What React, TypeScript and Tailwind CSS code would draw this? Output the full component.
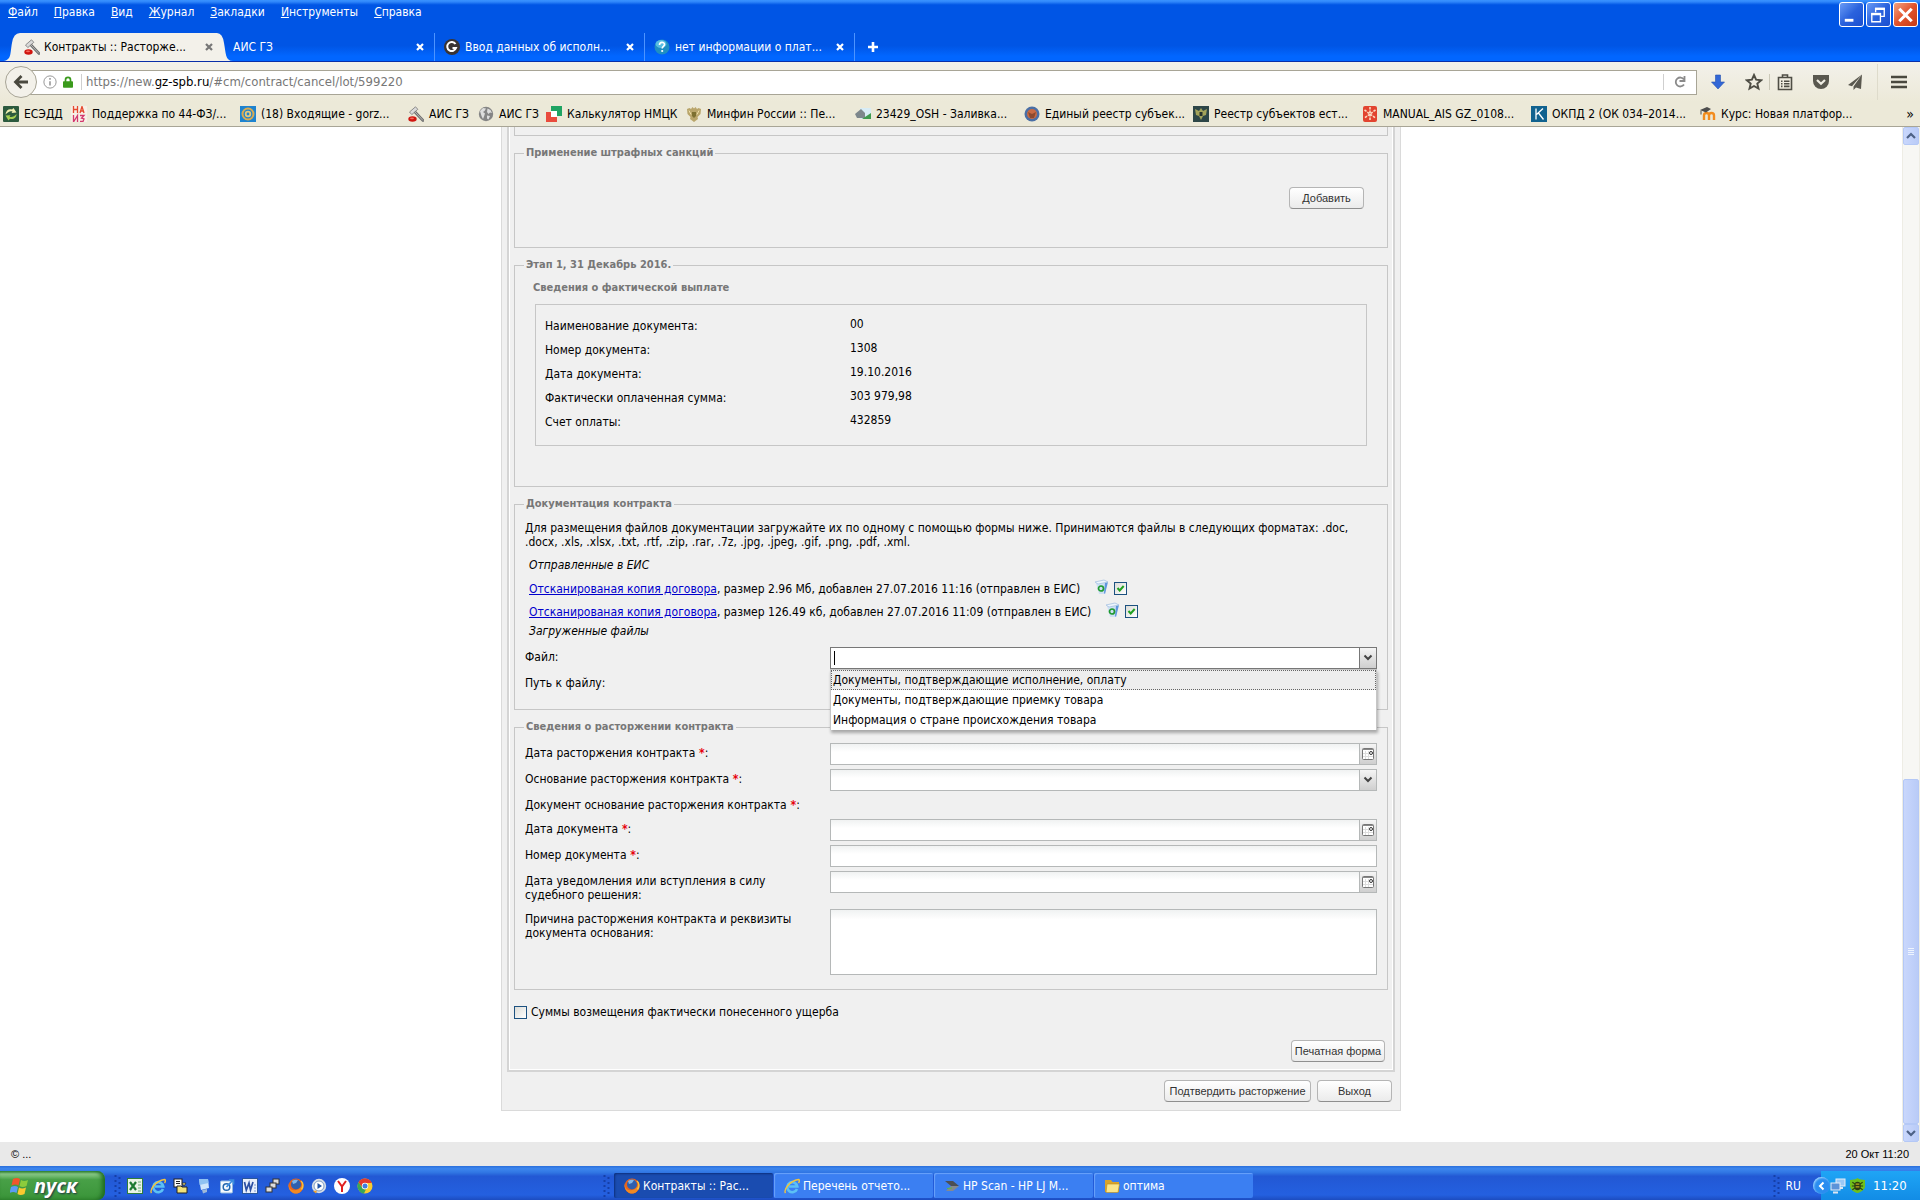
import type { ReactNode } from 'react';

const sans = "font-['DejaVu_Sans_Condensed','DejaVu_Sans','Noto_Sans',sans-serif]";

// Small 16px pictures used by tabs, bookmarks and the taskbar
const icons: Record<string, ReactNode> = {
    hammer: (
        <>
            <path d="M7 6l8 8.500" stroke="#6b6b6b" strokeWidth="2.600" strokeLinecap="round" />
            <path d="M7 6l8 8.500" stroke="#b9b9b9" strokeWidth="1" />
            <path d="M1.500 6L7.500.8l2.300 2.500-6 5.300z" fill="#d9d9d9" stroke="#777" strokeWidth=".8" />
            <ellipse cx="4.500" cy="13" rx="4.200" ry="2.700" fill="#d0150f" />
            <ellipse cx="4" cy="12.300" rx="2" ry=".9" fill="#f56a5c" />
        </>
    ),
    g: (
        <>
            <circle cx="8" cy="8" r="8" fill="#3a3433" />
            <path d="M11.500 5A4.500 4.500 0 1 0 12 9H8.500" stroke="#fff" strokeWidth="2" fill="none" />
        </>
    ),
    question: (
        <>
            <circle cx="8" cy="8" r="7.500" fill="#1f8fc2" />
            <ellipse cx="7" cy="5" rx="5.500" ry="4" fill="#6fd0ee" opacity=".7" />
            <path d="M5.500 6c0-3.500 5-3.300 5-.5 0 2-2.300 1.800-2.300 4" stroke="#fff" strokeWidth="1.600" fill="none" />
            <circle cx="8.200" cy="12" r="1.100" fill="#fff" />
        </>
    ),
    esedd: (
        <>
            <rect width="16" height="16" rx="1" fill="#2c5a3e" />
            <path d="M2.500 8.500C3 4 6 2.500 9 3.500L10.500 2l3 4.500-5 .5 1-1.500C7 4.500 5 6 2.500 8.500z" fill="#f0efb0" />
            <path d="M13.500 8C13.500 12 10 14 7 12.700L5.500 14.500l-3-5 5-.3-1 1.600c2.500.8 5-.3 7-2.800z" fill="#a6cf52" />
        </>
    ),
    naiz: (
        <>
            <rect width="16" height="16" fill="#f7efe6" />
            <path d="M2.500 0v7M6.500 0v7M2.500 3.500h4M9 7l2-6.500L13 7M9.700 5h2.600" stroke="#e5492e" strokeWidth="1.300" fill="none" />
            <path d="M2.500 9v7l4-6.500V16M9 9.500h4l-2.500 2.700 2.500.8-1 2.500H9" stroke="#d3386e" strokeWidth="1.300" fill="none" />
        </>
    ),
    mail: (
        <>
            <rect width="16" height="16" fill="#1e83cf" />
            <circle cx="8" cy="8" r="5.500" stroke="#d9ac52" strokeWidth="2" fill="none" />
            <circle cx="8" cy="8" r="2.300" stroke="#e8c878" strokeWidth="1.800" fill="none" />
        </>
    ),
    globe: (
        <>
            <circle cx="8" cy="8" r="7.200" fill="#858585" />
            <path d="M2 5l3-3 3 .5L6.500 5 5 6l2 1.500-1 3L5 13 3.500 10z" fill="#ddd" />
            <path d="M9.500 2.500l3 1.500 1.500 3-2-.5-1.500 1.500-1.500-2zM9 9.500l3 .5-1.500 3.500-1.500-1z" fill="#ddd" />
        </>
    ),
    calc: (
        <>
            <path d="M5 0h11v10h-5V5H5z" fill="#1fa463" />
            <path d="M0 6h5v5h6v5H0z" fill="#e94b3c" />
            <path d="M5 5h6v6H5z" fill="#fff" />
        </>
    ),
    eagle: (
        <>
            <path d="M1 3l2.500-1L5 3l1.500-2L8 2.500 9.500 1 11 3l1.500-1L15 3l-.5 5-3 3 .5 2-4 3-4-3 .5-2-3-3z" fill="#b9a56a" />
            <path d="M6 6h4v4l-2 2-2-2z" fill="#7d7030" />
            <path d="M3 4.500l2 4M13 4.500l-2 4" stroke="#efe0a8" />
        </>
    ),
    house: (
        <>
            <rect x="5" y="2" width="11" height="11" fill="#d8ecf5" />
            <path d="M0 8l6-5 4 4v5H2z" fill="#7d878c" />
            <path d="M7 13l9-6v6z" fill="#3f9b4e" />
        </>
    ),
    crest: (
        <>
            <circle cx="8" cy="8" r="7.500" fill="#4a6fa5" />
            <circle cx="8" cy="8" r="5" fill="#c96a43" />
            <path d="M4 6l4 2 4-2-2 6H6z" fill="#8d4a2f" />
        </>
    ),
    darkEagle: (
        <>
            <rect width="16" height="16" fill="#2d4647" />
            <path d="M2 3l4 2 2-3 2 3 4-2-1 6-3 1-2 4-2-4-3-1z" fill="#a3a35a" />
            <path d="M6.500 6h3v4h-3z" fill="#28332e" />
        </>
    ),
    manual: (
        <>
            <rect x="1" width="14" height="16" rx="2" fill="#e2442f" />
            <path d="M8 1v14M2.500 4l11 8M13.500 4l-11 8" stroke="#fbd9c0" strokeWidth="1.600" strokeDasharray="2.500 1" />
        </>
    ),
    k: (
        <>
            <rect width="16" height="16" fill="#11628f" />
            <path d="M5 2.500v11M12 2.500L5.500 8.500M7.500 7l5 6.500" stroke="#fff" strokeWidth="1.300" />
        </>
    ),
    moodle: (
        <>
            <path d="M4 14V9.500Q4 7 6.500 7T9 9.500V14M9 9.500Q9 7 11.500 7T14 9.500V14" stroke="#f28c1e" strokeWidth="2.400" fill="none" />
            <path d="M0 4l7-3 4 2-5 3.500z" fill="#4d4d4d" />
            <path d="M1 4.500v4" stroke="#4d4d4d" />
        </>
    ),
    excel: (
        <>
            <rect x=".5" y=".5" width="15" height="15" fill="#e8f3e6" stroke="#2f7d3b" />
            <path d="M3 4l6 8M9 4l-6 8" stroke="#1d7a32" strokeWidth="2.200" />
            <path d="M11 4h3M11 7h3M11 10h3M11 13h3" stroke="#6fae78" />
        </>
    ),
    ie: (
        <>
            <path d="M13 11A5 5 0 1 1 13.300 8.500H5" stroke="#5cc1f5" strokeWidth="2.600" fill="none" />
            <path d="M1.500 15C-.5 12 5 3 14.500 1.500c1.500.2.800 2.500 0 3.500" stroke="#f3c33c" strokeWidth="1.400" fill="none" />
        </>
    ),
    folderPage: (
        <>
            <rect x="1" y="1" width="8" height="8" fill="#fff" stroke="#222" />
            <path d="M3 3.500h4M3 5.500h4" stroke="#222" />
            <path d="M4 8h4l1 1h5v6H4z" fill="#f2e27a" stroke="#222" />
            <path d="M9 5h4l-2 3z" fill="#f2e27a" stroke="#222" strokeWidth=".7" />
        </>
    ),
    desktop: (
        <>
            <path d="M3 1h9l1 9-8 2z" fill="#cfe6fb" />
            <path d="M3 1h9l.5 4-9 2z" fill="#8fc2f2" />
            <path d="M6 12l5-1v3l-4 1.500z" fill="#9fb9d8" />
        </>
    ),
    outlook: (
        <>
            <rect x="1.500" y="3" width="12" height="12" rx="1" fill="#f4f9fe" stroke="#8fb8e0" />
            <circle cx="7.500" cy="9" r="3.300" stroke="#2366ad" strokeWidth="1.500" fill="none" />
            <path d="M7.500 9l6-6.500M10 2h4.500v4.500" stroke="#3a8de0" strokeWidth="1.700" fill="none" />
        </>
    ),
    word: (
        <>
            <rect x=".5" y=".5" width="15" height="15" fill="#e7eefb" stroke="#2b579a" />
            <path d="M2.500 4l1.800 8L7 5l1.500 7L11 4" stroke="#2b4fa3" strokeWidth="1.700" fill="none" />
            <path d="M12 7h2M12 10h2M12 13h2" stroke="#7c9ad0" />
        </>
    ),
    nodes: (
        <>
            <path d="M3 12l5-4 5-5" stroke="#222" />
            <rect x="8" y="1" width="6" height="5" fill="#ddd" stroke="#333" />
            <rect x="5" y="5" width="6" height="5" fill="#ddd" stroke="#333" />
            <rect x="1" y="9" width="6" height="5" fill="#ddd" stroke="#333" />
        </>
    ),
    firefox: (
        <>
            <circle cx="8" cy="8" r="7.500" fill="#e8631c" />
            <circle cx="8" cy="6.500" r="5" fill="#2f5fae" />
            <path d="M4 3q3-2 6-1l-2 3-3 1z" fill="#7fb6ea" />
            <path d="M.8 5c0 4 1 6.500 4.200 7 4 .8 8-1 9-5.500 1.500 4-1 9-6 9S-.5 10 .8 5z" fill="#f08a24" />
            <path d="M13 3c2.500 2 2.500 6 .5 8.500" stroke="#f9c33b" strokeWidth="1.400" fill="none" />
        </>
    ),
    media: (
        <>
            <circle cx="8" cy="8" r="7.200" fill="#d6dde6" />
            <circle cx="8" cy="8" r="5" fill="#fff" stroke="#7d9cc4" />
            <path d="M6.500 5l4.500 3-4.500 3z" fill="#2256a8" />
            <path d="M2 13l3 2.500 1-3z" fill="#f0a22e" />
        </>
    ),
    yandex: (
        <>
            <circle cx="8" cy="8" r="8" fill="#fff" />
            <path d="M4 3l4 5.500L12 3M8 8v6" stroke="#e02020" strokeWidth="2" fill="none" />
        </>
    ),
    chrome: (
        <>
            <circle cx="8" cy="8" r="7.500" fill="#f7cd31" />
            <path d="M1.500 4.200A7.500 7.500 0 0 1 14.800 5H8a3.300 3.300 0 0 0-3 4.500z" fill="#e33b2e" />
            <path d="M1.500 4.200L5 9.500a3.300 3.300 0 0 0 4 1.700l-2 4.300A7.500 7.500 0 0 1 1.500 4.200z" fill="#3aa757" />
            <circle cx="8" cy="8" r="3.200" fill="#fff" />
            <circle cx="8" cy="8" r="2.500" fill="#3f7fe0" />
        </>
    ),
    hp: (
        <>
            <path d="M1 3h8l6 5H7z" fill="#4c4f54" />
            <path d="M2 13l5-5h8l-6 5z" fill="#85898f" />
            <path d="M3 10.500l5-.5" stroke="#57b947" />
        </>
    ),
    folder: (
        <>
            <path d="M1 2h6l1.500 2H15v10H1z" fill="#d9a32b" />
            <path d="M3 6h12.500L14 14.500H2z" fill="#fbe58a" stroke="#b98a1d" strokeWidth=".6" />
        </>
    ),
    network: (
        <>
            <rect x="6" y="1" width="9" height="7" fill="#9bc8f5" stroke="#e6eef8" />
            <path d="M9 10h4" stroke="#dce6f2" strokeWidth="2" />
            <rect x="1" y="5" width="9" height="7" fill="#5c93d8" stroke="#e6eef8" />
            <path d="M3 14.500h5" stroke="#dce6f2" strokeWidth="2" />
        </>
    ),
    drweb: (
        <>
            <path d="M8 0c2 1.500 5 2 8 2v7c0 3-4 6-8 7-4-1-8-4-8-7V2c3 0 6-.5 8-2z" fill="#6fc01b" />
            <ellipse cx="8" cy="8.500" rx="3.500" ry="4.500" fill="#2c3a12" />
            <path d="M2.500 4.500l3 2M2 8.500h12M2.500 12.500l3-2M13.500 4.500l-3 2M13.500 12.500l-3-2" stroke="#2c3a12" strokeWidth="1.200" />
            <path d="M6 6.500h4M6 9.500h4" stroke="#f0d020" />
        </>
    ),
    trash: (
        <>
            <path d="M2 4l11-1-2 12H5z" fill="#cfe0f3" />
            <path d="M11 4l3-1-3 12-1-1z" fill="#5f97dd" />
            <path d="M1 3l9-2 4 2-10 2z" fill="#eef5fc" stroke="#9dbbe0" strokeWidth=".7" />
            <circle cx="7" cy="9.500" r="2.500" stroke="#1f9a2f" strokeWidth="1.700" fill="none" />
        </>
    ),
};

function Icon({ name, className = 'size-4' }: { name: string; className?: string }) {
    return (
        <svg viewBox="0 0 16 16" fill="none" aria-hidden="true" className={`${className} shrink-0`}>
            {icons[name]}
        </svg>
    );
}

const menu = ['Файл', 'Правка', 'Вид', 'Журнал', 'Закладки', 'Инструменты', 'Справка'];

const tabs = [
    { icon: '', title: 'АИС ГЗ' },
    { icon: 'g', title: 'Ввод данных об исполн...' },
    { icon: 'question', title: 'нет информации о плат...' },
];

const bookmarks = [
    { icon: 'esedd', title: 'ЕСЭДД', width: 'w-[68px]' },
    { icon: 'naiz', title: 'Поддержка по 44-ФЗ/...', width: 'w-[169px]' },
    { icon: 'mail', title: '(18) Входящие - gorz...', width: 'w-[168px]' },
    { icon: 'hammer', title: 'АИС ГЗ', width: 'w-[70px]' },
    { icon: 'globe', title: 'АИС ГЗ', width: 'w-[68px]' },
    { icon: 'calc', title: 'Калькулятор НМЦК', width: 'w-[140px]' },
    { icon: 'eagle', title: 'Минфин России :: Пе...', width: 'w-[169px]' },
    { icon: 'house', title: '23429_OSH - Заливка...', width: 'w-[169px]' },
    { icon: 'crest', title: 'Единый реестр субъек...', width: 'w-[169px]' },
    { icon: 'darkEagle', title: 'Реестр субъектов ест...', width: 'w-[169px]' },
    { icon: 'manual', title: 'MANUAL_AIS GZ_0108...', width: 'w-[169px]' },
    { icon: 'k', title: 'ОКПД 2 (ОК 034–2014...', width: 'w-[169px]' },
    { icon: 'moodle', title: 'Курс: Новая платфор...', width: 'w-[170px]' },
];

const payment = [
    ['Наименование документа:', '00'],
    ['Номер документа:', '1308'],
    ['Дата документа:', '19.10.2016'],
    ['Фактически оплаченная сумма:', '303 979,98'],
    ['Счет оплаты:', '432859'],
];

const sentFiles = [
    ', размер 2.96 Мб, добавлен 27.07.2016 11:16 (отправлен в ЕИС)',
    ', размер 126.49 кб, добавлен 27.07.2016 11:09 (отправлен в ЕИС)',
];

const fileTypes = [
    'Документы, подтверждающие исполнение, оплату',
    'Документы, подтверждающие приемку товара',
    'Информация о стране происхождения товара',
];

const quickLaunch = ['excel', 'ie', 'folderPage', 'desktop', 'outlook', 'word', 'nodes', 'firefox', 'media', 'yandex', 'chrome'];

const tasks = [
    { icon: 'firefox', title: 'Контракты :: Рас...', active: true },
    { icon: 'ie', title: 'Перечень отчето...' },
    { icon: 'hp', title: 'HP Scan - HP LJ M...' },
    { icon: 'folder', title: 'оптима' },
];

function TabClose({ color }: { color: string }) {
    return (
        <button type="button" aria-label="Закрыть вкладку" className="flex size-4 shrink-0 items-center justify-center">
            <svg viewBox="0 0 8 8" className="size-2">
                <path d="M1 1l6 6M7 1L1 7" stroke={color} strokeWidth="2.200" />
            </svg>
        </button>
    );
}

function WindowButtons() {
    const base = 'flex size-[25px] items-center justify-center rounded-[3px] border border-white';
    const blue = 'bg-gradient-to-br from-[#6b9bf5] via-[#2a62dd] to-[#1a4fd0]';
    return (
        <div className="flex gap-0.5 pt-0.5 pr-0.5">
            <button type="button" aria-label="Свернуть" className={`${base} ${blue}`}>
                <svg viewBox="0 0 24 24" className="size-6"><path d="M5 16h9v3H5z" fill="#fff" /></svg>
            </button>
            <button type="button" aria-label="Восстановить" className={`${base} ${blue}`}>
                <svg viewBox="0 0 24 24" className="size-6" fill="none" stroke="#fff">
                    <path d="M9 9V5.500h9v8h-3.500" strokeWidth="1.400" />
                    <path d="M8.300 5.500h10.400" strokeWidth="2.500" />
                    <path d="M5 11h9v8H5z" strokeWidth="1.400" />
                    <path d="M4.300 11h10.400" strokeWidth="2.500" />
                </svg>
            </button>
            <button type="button" aria-label="Закрыть" className={`${base} bg-gradient-to-br from-[#f0a080] via-[#e2522b] to-[#c43a14]`}>
                <svg viewBox="0 0 24 24" className="size-6"><path d="M5.500 5.500l13 13M18.500 5.500l-13 13" stroke="#fff" strokeWidth="3.200" /></svg>
            </button>
        </div>
    );
}

function TitleBar() {
    return (
        <header className="border-b border-[#0a2fa8] bg-[linear-gradient(#3a93ff_0%,#2f86fa_3%,#0055e5_8%,#0055e5_75%,#0166ff_92%)] text-white">
            <div className="flex h-[33px] items-start justify-between">
                <nav className="flex gap-4 pt-1 pl-2 text-xs leading-4">
                    {menu.map((item) => (
                        <a key={item} href="#menu"><u>{item[0]}</u>{item.slice(1)}</a>
                    ))}
                </nav>
                <WindowButtons />
            </div>
            <div className="flex h-7 items-stretch text-xs">
                <div className="flex w-[233px] shrink-0 items-stretch text-black">
                    <svg viewBox="0 0 20 28" className="h-7 w-5 shrink-0"><path d="M2 28C12 28 10 20 12 10Q13.500 0 20 0v28z" fill="#f3f1ea" /></svg>
                    <div className="flex min-w-0 flex-1 items-center gap-1 bg-[#f3f1ea] pl-1">
                        <Icon name="hammer" />
                        <span className="flex-1 truncate">Контракты :: Расторже...</span>
                        <TabClose color="#777" />
                    </div>
                    <svg viewBox="0 0 16 28" className="h-7 w-4 shrink-0"><path d="M16 28C8 28 9 20 7 10Q5.500 0 0 0v28z" fill="#f3f1ea" /></svg>
                </div>
                {tabs.map((tab, i) => (
                    <div key={tab.title} className={`flex shrink-0 items-center gap-[5px] ${i === 0 ? 'w-[202px]' : 'w-[210px] pl-[9px]'} border-r border-[#4d94ff] pr-1.5`}>
                        {tab.icon && <Icon name={tab.icon} />}
                        <span className="flex-1 truncate">{tab.title}</span>
                        <TabClose color="#fff" />
                    </div>
                ))}
                <button type="button" aria-label="Новая вкладка" className="px-3">
                    <svg viewBox="0 0 12 12" className="size-3"><path d="M6 1v10M1 6h10" stroke="#fff" strokeWidth="2.600" /></svg>
                </button>
            </div>
        </header>
    );
}

function Toolbar() {
    return (
        <div className="flex h-10 items-center bg-gradient-to-b from-[#f3f1ea] to-[#ece9d8]">
            <button type="button" aria-label="Назад" className="z-10 ml-[5px] flex size-8 shrink-0 items-center justify-center rounded-full border border-[#a8a596] bg-[#f3f1ea]">
                <svg viewBox="0 0 16 16" className="size-4" fill="none" stroke="#4a493f" strokeWidth="2.800"><path d="M15 8H3M8.500 2L2.500 8l6 6" /></svg>
            </button>
            <div className="-ml-2 flex h-[25px] min-w-0 flex-1 items-center border border-[#a8a596] bg-white pl-[13px]">
                <svg viewBox="0 0 16 16" className="size-3.5 shrink-0" fill="none" stroke="#8a8a8a">
                    <circle cx="8" cy="8" r="7" />
                    <path d="M8 7v5M8 3.500v2" strokeWidth="1.600" />
                </svg>
                <svg viewBox="0 0 12 14" className="ml-1.5 h-3 w-2.5 shrink-0">
                    <path d="M3 7V4.500a3 3 0 0 1 6 0V7" stroke="#3b9a1c" strokeWidth="2" fill="none" />
                    <rect x="0" y="6" width="12" height="8" rx="1" fill="#3b9a1c" />
                </svg>
                <div className="ml-2 h-4 border-l border-[#cfcfcf]" />
                <div className="ml-1 flex-1 text-[13px] text-[#777]">https://new.<span className="text-black">gz-spb.ru</span>/#cm/contract/cancel/lot/599220</div>
                <button type="button" aria-label="Обновить" className="flex h-4 items-center border-l border-[#cfcfcf] px-2.5">
                    <svg viewBox="0 0 12 12" className="size-3" fill="none" stroke="#8a8a8a" strokeWidth="1.800"><path d="M10 8.500A4.500 4.500 0 1 1 10 3.500" /><path d="M10.500 0v5h-5" /></svg>
                </button>
            </div>
            <div className="flex items-center pr-3">
                <button type="button" aria-label="Загрузки" className="ml-3">
                    <svg viewBox="0 0 18 18" className="size-[18px]"><path d="M6.500 2h5v7h4L9 16 2.500 9h4z" fill="#3367d6" stroke="#2552b0" strokeWidth=".6" /></svg>
                </button>
                <button type="button" aria-label="В закладки" className="ml-[18px]">
                    <svg viewBox="0 0 18 18" className="size-[18px]"><path d="M9 2l2.100 4.700 5.100.5-3.900 3.400 1.200 5L9 13l-4.500 2.600 1.200-5L1.800 7.200l5.100-.5z" stroke="#4f4e45" strokeWidth="1.900" fill="none" /></svg>
                </button>
                <div className="ml-1.5 h-4 border-l border-[#cbc8b8]" />
                <button type="button" aria-label="Все закладки" className="ml-1.5">
                    <svg viewBox="0 0 18 18" className="size-[18px]" fill="none" stroke="#4f4e45" strokeWidth="1.600"><path d="M2.500 4.500h13v12h-13zM6.500 4V2h5v2M5 8.200h1.500M8 8.200h5.500M5 10.800h1.500M8 10.800h5.500M5 13.400h1.500M8 13.400h5.500" /></svg>
                </button>
                <button type="button" aria-label="Pocket" className="ml-[18px]">
                    <svg viewBox="0 0 18 18" className="size-[18px]"><path d="M1 2h16v6a8 8 0 0 1-16 0z" fill="#5a584f" /><path d="M5 7l4 3.800L13 7" stroke="#f0eee4" strokeWidth="2.200" fill="none" /></svg>
                </button>
                <button type="button" aria-label="Отправить" className="ml-4">
                    <svg viewBox="0 0 18 18" className="size-[18px]"><path d="M16 1.500L2 12l4 1.200zM16 1.500L7.500 13.500V17l2.500-2.500 5 1.500z" fill="#5a584f" /></svg>
                </button>
                <div className="ml-[13px] h-9 border-l border-[#dedbcb]" />
                <button type="button" aria-label="Меню" className="ml-3">
                    <svg viewBox="0 0 18 18" className="size-[18px]"><path d="M1 4h16M1 9h16M1 14h16" stroke="#4a493f" strokeWidth="2.600" /></svg>
                </button>
            </div>
        </div>
    );
}

function Bookmarks() {
    return (
        <nav className="flex h-[25px] items-center border-b border-[#a8a596] bg-[#ece9d8] pl-[3px] text-xs">
            {bookmarks.map((b, i) => (
                <a key={i} href="#bookmark" className={`flex shrink-0 items-center gap-[5px] whitespace-nowrap ${b.width}`}>
                    <Icon name={b.icon} />
                    {b.title}
                </a>
            ))}
            <button type="button" className="mr-1.5 ml-auto text-sm">»</button>
        </nav>
    );
}

function Section({ title, children }: { title: string; children: ReactNode }) {
    return (
        <fieldset className="mt-2.5 border border-[#c6c6c6]">
            <legend className="ml-[9px] px-0.5 text-[11px] leading-[14px] font-bold text-[#777]">{title}</legend>
            {children}
        </fieldset>
    );
}

function GreyButton({ children, className = '' }: { children: ReactNode; className?: string }) {
    return (
        <button type="button" className={`h-[22px] rounded-[4px] border border-[#b5b5b5] border-b-[#8f8f8f] bg-gradient-to-b from-white to-[#ebebeb] font-['Liberation_Sans',sans-serif] text-[11px] whitespace-nowrap text-[#333] ${className}`}>
            {children}
        </button>
    );
}

const fieldBox = 'w-full min-w-0 bg-gradient-to-b from-[#f0f2f2] to-white to-40% px-1 outline-none';

function Chevron() {
    return <svg viewBox="0 0 10 8" className="h-2 w-2.5"><path d="M1.500 1.500L5 5l3.500-3.500" stroke="#444" strokeWidth="2" fill="none" /></svg>;
}

function Label({ htmlFor, required, children }: { htmlFor?: string; required?: boolean; children: ReactNode }) {
    return (
        <label htmlFor={htmlFor} className="max-w-[280px] py-[3px] leading-[14px]">
            {children}
            {required && <span className="font-bold text-red-600"> *</span>}:
        </label>
    );
}

function DateField({ id }: { id: string }) {
    return (
        <div className="flex h-[22px] border border-[#b5b8b8]">
            <input id={id} type="text" className={fieldBox} />
            <button type="button" aria-label="Календарь" className="flex w-[17px] shrink-0 items-center justify-center border-l border-[#b5b8b8] bg-gradient-to-b from-[#f5f5f5] to-[#cfcfcf]">
                <svg viewBox="0 0 12 12" className="size-3">
                    <rect x=".5" y=".5" width="11" height="11" rx="1" fill="#fff" stroke="#777" />
                    <path d="M1 1.500h10" stroke="#888" />
                    <path d="M3.500 3v8M6.500 3v8M1 5.500h10M1 8.500h10" stroke="#ddd" />
                    <circle cx="9" cy="5" r="1.500" fill="#fff" stroke="#333" />
                </svg>
            </button>
        </div>
    );
}

function Check({ id, checked, label }: { id: string; checked?: boolean; label?: string }) {
    return (
        <span className="inline-grid shrink-0 *:col-start-1 *:row-start-1">
            <input id={id} type="checkbox" defaultChecked={checked} aria-label={label} className="size-[13px] appearance-none border border-[#1c5180] bg-gradient-to-br from-[#dcdcd7] to-white" />
            {checked && (
                <svg viewBox="0 0 13 13" className="pointer-events-none size-[13px]"><path d="M3.500 6l2.200 2.500L9.700 4" stroke="#21a121" strokeWidth="2" fill="none" /></svg>
            )}
        </span>
    );
}

function FileCombo() {
    return (
        <div className="relative">
            <div className="flex h-[22px] border border-[#777]">
                <div className="flex flex-1 items-center bg-white pl-[3px]">
                    <span className="h-3.5 border-l border-black" />
                    <input id="file" type="text" role="combobox" aria-expanded="true" aria-controls="file-types" className="w-full min-w-0 outline-none" />
                </div>
                <button type="button" aria-label="Открыть список" className="flex w-[17px] shrink-0 items-center justify-center border-l border-[#777] bg-gradient-to-b from-[#f5f5f5] to-[#cfcfcf]">
                    <Chevron />
                </button>
            </div>
            <ul id="file-types" role="listbox" className="absolute inset-x-0 top-full z-10 border-x border-t border-[#c6c6c6] bg-white shadow-[1px_3px_3px_rgba(0,0,0,0.3)]">
                {fileTypes.map((t, i) => (
                    <li key={t} role="option" aria-selected={i === 0} className={`h-5 border border-dotted px-px leading-[18px] ${i === 0 ? 'border-[#666] bg-[#eee]' : 'border-transparent'}`}>
                        {t}
                    </li>
                ))}
            </ul>
        </div>
    );
}

function ContractForm() {
    return (
        <div className="mx-auto w-full max-w-[900px] border-x border-b border-[#dadada] bg-[#f0f0f0] px-[5px] pb-2 text-xs">
            <div className="border-x-2 border-b-2 border-[#d4d4d4]">
                <div className="border-x border-b border-white px-1 pb-[7px]">
                    <div className="h-[9px] border-x border-b border-[#c6c6c6]" />

                    <Section title="Применение штрафных санкций">
                        <div className="flex justify-end pt-[27px] pr-[23px] pb-[38px]">
                            <GreyButton className="w-[75px]">Добавить</GreyButton>
                        </div>
                    </Section>

                    <Section title="Этап 1, 31 Декабрь 2016.">
                        <h3 className="pt-[9px] pl-[18px] text-[11px] leading-[14px] font-bold text-[#777]">Сведения о фактической выплате</h3>
                        <dl className="mx-5 mt-[9px] mb-10 border border-[#c6c6c6] pt-[9px] pb-[11px] pl-[9px]">
                            {payment.map(([name, value]) => (
                                <div key={name} className="grid h-6 grid-cols-[305px_1fr]">
                                    <dt className="leading-6">{name}</dt>
                                    <dd className="leading-5">{value}</dd>
                                </div>
                            ))}
                        </dl>
                    </Section>

                    <Section title="Документация контракта">
                        <div className="px-2.5 pt-2.5 pb-3.5">
                            <p className="max-w-[830px] leading-[14px]">
                                Для размещения файлов документации загружайте их по одному с помощью формы ниже. Принимаются файлы в следующих форматах: .doc, .docx, .xls, .xlsx, .txt, .rtf, .zip, .rar, .7z, .jpg, .jpeg, .gif, .png, .pdf, .xml.
                            </p>
                            <div className="mt-[5px] mb-2 pl-1">
                                <p className="leading-[23px] italic">Отправленные в ЕИС</p>
                                {sentFiles.map((info, i) => (
                                    <div key={info} className="flex h-[23px] items-center whitespace-nowrap">
                                        <a href="#file" className="text-[#0000cc] underline">Отсканированая копия договора</a>
                                        {info}
                                        <button type="button" aria-label="Удалить файл" className="mr-1 mb-1 ml-3.5"><Icon name="trash" /></button>
                                        <Check id={`sent-${i}`} checked label="Выбрать файл" />
                                    </div>
                                ))}
                                <p className="leading-4 italic">Загруженные файлы</p>
                            </div>
                            <div className="grid grid-cols-[305px_1fr] gap-y-1">
                                <Label htmlFor="file">Файл</Label>
                                <FileCombo />
                                <div className="flex h-[22px]"><Label>Путь к файлу</Label></div>
                            </div>
                        </div>
                    </Section>

                    <Section title="Сведения о расторжении контракта">
                        <div className="grid grid-cols-[305px_1fr] items-start gap-y-1 px-2.5 pt-[9px] pb-3.5">
                            <Label htmlFor="cancel-date" required>Дата расторжения контракта</Label>
                            <DateField id="cancel-date" />
                            <Label htmlFor="reason" required>Основание расторжения контракта</Label>
                            <div className="flex h-[22px] border border-[#b5b8b8]">
                                <select id="reason" className={`${fieldBox} appearance-none`} defaultValue="">
                                    <option value="" />
                                </select>
                                <span className="flex w-[17px] shrink-0 items-center justify-center border-l border-[#b5b8b8] bg-gradient-to-b from-[#f5f5f5] to-[#cfcfcf]"><Chevron /></span>
                            </div>
                            <p className="col-span-2 py-[3px] leading-[14px]">Документ основание расторжения контракта<span className="font-bold text-red-600"> *</span>:</p>
                            <Label htmlFor="doc-date" required>Дата документа</Label>
                            <DateField id="doc-date" />
                            <Label htmlFor="doc-number" required>Номер документа</Label>
                            <input id="doc-number" type="text" className={`${fieldBox} h-[22px] border border-[#b5b8b8]`} />
                            <Label htmlFor="notice-date">Дата уведомления или вступления в силу судебного решения</Label>
                            <DateField id="notice-date" />
                            <Label htmlFor="cause">Причина расторжения контракта и реквизиты документа основания</Label>
                            <textarea id="cause" className="h-[66px] w-full resize-none border border-[#b5b8b8] bg-gradient-to-b from-[#f0f2f2] to-white to-15% outline-none" />
                        </div>
                    </Section>

                    <div className="mt-3.5 flex h-4 items-center gap-1">
                        <Check id="damage" />
                        <label htmlFor="damage">Суммы возмещения фактически понесенного ущерба</label>
                    </div>
                    <div className="mt-5 flex justify-end pr-[3px]">
                        <GreyButton className="w-[94px]">Печатная форма</GreyButton>
                    </div>
                </div>
            </div>
            <div className="mt-2 flex justify-end gap-1.5 pr-[3px]">
                <GreyButton className="w-[147px]">Подтвердить расторжение</GreyButton>
                <GreyButton className="w-[75px]">Выход</GreyButton>
            </div>
        </div>
    );
}

function ScrollBar() {
    const box = 'flex w-full shrink-0 items-center justify-center rounded-[2px] border border-[#b4c8f6] bg-gradient-to-r from-[#c9d7fc] to-[#b9cbf7]';
    return (
        <div className="flex w-[18px] shrink-0 flex-col border-x border-[#eeede5] bg-[#f7f7f4]">
            <button type="button" aria-label="Вверх" className={`${box} h-[18px]`}>
                <svg viewBox="0 0 10 8" className="h-2 w-2.5"><path d="M1 6l4-4 4 4" stroke="#4d6185" strokeWidth="2.200" fill="none" /></svg>
            </button>
            <div className="flex-[635_0_0]" />
            <div className={`${box} flex-[343_0_0]`}>
                <svg viewBox="0 0 8 8" className="size-2"><path d="M1 .5h6M1 2.500h6M1 4.500h6M1 6.500h6" stroke="#eef4fe" /></svg>
            </div>
            <button type="button" aria-label="Вниз" className={`${box} h-[18px]`}>
                <svg viewBox="0 0 10 8" className="h-2 w-2.5"><path d="M1 2l4 4 4-4" stroke="#4d6185" strokeWidth="2.200" fill="none" /></svg>
            </button>
        </div>
    );
}

function Grip() {
    return (
        <svg viewBox="0 0 8 24" className="h-6 w-2 shrink-0">
            <path d="M2.500 1v22M6.500 3v20" stroke="#153fa8" strokeWidth="2" strokeDasharray="2 3" />
        </svg>
    );
}

function Taskbar() {
    return (
        <footer className="flex h-[34px] items-end bg-[linear-gradient(#2a6fdc_0%,#3d86ee_8%,#2f74e2_20%,#2258d4_30%,#2460e0_85%,#1c4cc0_100%)] text-xs text-white">
            <button type="button" className="flex h-[29px] w-[105px] shrink-0 items-center gap-1 rounded-r-lg bg-[linear-gradient(#3f8f3f_0%,#8ccb8a_10%,#48a047_30%,#3a9439_100%)] pl-2.5 shadow-[inset_-3px_0_4px_#1f6b1f]">
                <svg viewBox="0 0 20 20" className="size-5">
                    <path d="M3 3q4-2 7 0L8.500 9.500q-3-2-7 0z" fill="#f0562b" />
                    <path d="M11 4q3 2 7 0l-1.500 6q-4 2-7 0z" fill="#8ccc3c" />
                    <path d="M1 11q4-2 7 0l-1.500 6q-3-2-7 0z" fill="#5b9cf5" />
                    <path d="M9 11.500q3 2 7 0L14.500 18q-4 2-7 0z" fill="#fbc92f" />
                </svg>
                <span className="font-['Open_Sans','Noto_Sans',sans-serif] text-xl leading-6 font-bold italic [text-shadow:1px_1px_2px_#234]">пуск</span>
            </button>
            <div className="flex h-[29px] items-center gap-1.5 pl-2">
                <Grip />
                <div className="flex items-center gap-[7px]">
                    {quickLaunch.map((name) => (
                        <button key={name} type="button" aria-label={name}><Icon name={name} /></button>
                    ))}
                </div>
            </div>
            <div className="flex h-[29px] flex-1 items-center">
                <div className="w-[229px]" />
                <Grip />
                <div className="ml-1 flex gap-px">
                    {tasks.map((t) => (
                        <button key={t.title} type="button" className={`flex h-[25px] w-[159px] items-center gap-[3px] rounded-[2px] pl-2.5 ${t.active ? 'bg-[#1a4cb0] shadow-[inset_1px_1px_2px_#0d2f7d]' : 'bg-[#3b7ff2] shadow-[inset_1px_1px_1px_#6ba3fb]'}`}>
                            <Icon name={t.icon} />
                            {t.title}
                        </button>
                    ))}
                </div>
            </div>
            <div className="flex h-[29px] items-center">
                <Grip />
                <span className="ml-1.5">RU</span>
            </div>
            <div className="ml-5 flex h-[29px] w-[99px] items-center bg-gradient-to-b from-[#1fa5f5] to-[#128ce6]">
                <button type="button" aria-label="Показать значки" className="-ml-2 flex size-[17px] items-center justify-center rounded-full bg-[#2a8df0] shadow-[inset_1px_1px_2px_#9ed2ff]">
                    <svg viewBox="0 0 10 10" className="size-2.5"><path d="M6.500 1.500L3 5l3.500 3.500" stroke="#fff" strokeWidth="2" fill="none" /></svg>
                </button>
                <Icon name="network" />
                <Icon name="drweb" className="ml-1 size-[15px]" />
                <time className="ml-2 text-[13px]">11:20</time>
            </div>
        </footer>
    );
}

export default function App() {
    return (
        <div className={`flex min-h-screen flex-col bg-white text-black ${sans}`}>
            <TitleBar />
            <Toolbar />
            <Bookmarks />
            <div className="flex flex-1">
                <main className="min-w-0 flex-1">
                    <ContractForm />
                </main>
                <ScrollBar />
            </div>
            <div className="flex h-6 items-center justify-between bg-[#e9e9e9] px-[11px] font-['Liberation_Sans',sans-serif] text-[11px]">
                <span>© ...</span>
                <time>20 Окт 11:20</time>
            </div>
            <Taskbar />
        </div>
    );
}
